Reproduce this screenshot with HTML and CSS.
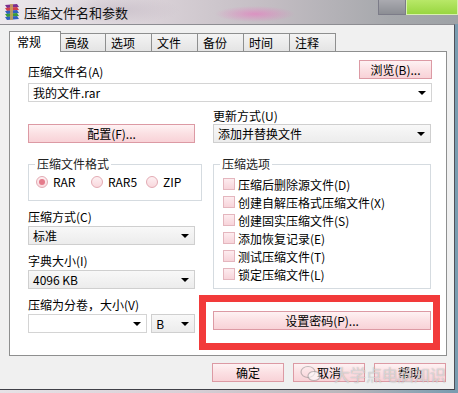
FILE: index.html
```html
<!DOCTYPE html>
<html lang="zh-CN">
<head>
    <meta charset="UTF-8">
    <title>压缩文件名和参数</title>
    <link rel="stylesheet" href="styles.css">
</head>
<body>

    <div class="titlebar">
        <svg class="app-icon" width="18" height="18" viewBox="0 0 18 18">
            <polygon points="2,2 14,1 16,4 4,5" fill="#7b2f8e"/>
            <polygon points="2,5 14,4 16,7 4,8" fill="#d0404a"/>
            <polygon points="2,8 14,7 16,10 4,11" fill="#2f5fc0"/>
            <polygon points="2,11 14,10 16,13 4,14" fill="#3c9a3a"/>
            <polygon points="2,14 14,13 16,16 4,17" fill="#2f5fc0"/>
            <rect x="7" y="1" width="3" height="16" fill="#c9a25a" opacity="0.85"/>
        </svg>
        <span class="title">压缩文件名和参数</span>
        <div class="win-btns">
            <span class="win-btn min"></span>
            <span class="win-btn close"></span>
        </div>
    </div>

    <div class="client">
        <div class="tabs">
            <span class="tab active">常规</span>
            <span class="tab">高级</span>
            <span class="tab">选项</span>
            <span class="tab">文件</span>
            <span class="tab">备份</span>
            <span class="tab">时间</span>
            <span class="tab">注释</span>
        </div>

        <div class="panel">
            <div class="row-top">
                <span class="label">压缩文件名(A)</span>
                <button class="btn browse">浏览(B)...</button>
            </div>
            <div class="combo edit"><span>我的文件.rar</span><i class="arrow"></i></div>

            <div class="cols">
                <div class="col col-left">
                    <button class="btn wide config">配置(F)...</button>

                    <fieldset class="group">
                        <legend>压缩文件格式</legend>
                        <div class="radios">
                            <span class="radio-item"><i class="radio checked"></i>RAR</span>
                            <span class="radio-item"><i class="radio"></i>RAR5</span>
                            <span class="radio-item"><i class="radio"></i>ZIP</span>
                        </div>
                    </fieldset>

                    <span class="label field-label">压缩方式(C)</span>
                    <div class="combo"><span>标准</span><i class="arrow"></i></div>

                    <span class="label field-label">字典大小(I)</span>
                    <div class="combo dict"><span>4096 KB</span><i class="arrow"></i></div>

                    <span class="label field-label">压缩为分卷，大小(V)</span>
                    <div class="split">
                        <div class="combo edit volume"><span></span><i class="arrow"></i></div>
                        <div class="combo unit"><span>B</span><i class="arrow"></i></div>
                    </div>
                </div>

                <div class="col col-right">
                    <span class="label update-label">更新方式(U)</span>
                    <div class="combo"><span>添加并替换文件</span><i class="arrow"></i></div>

                    <fieldset class="group options">
                        <legend>压缩选项</legend>
                        <div class="check-row"><i class="check"></i>压缩后删除源文件(D)</div>
                        <div class="check-row"><i class="check"></i>创建自解压格式压缩文件(X)</div>
                        <div class="check-row"><i class="check"></i>创建固实压缩文件(S)</div>
                        <div class="check-row"><i class="check"></i>添加恢复记录(E)</div>
                        <div class="check-row"><i class="check"></i>测试压缩文件(T)</div>
                        <div class="check-row"><i class="check"></i>锁定压缩文件(L)</div>
                    </fieldset>

                    <button class="btn wide password">设置密码(P)...</button>
                </div>
            </div>
        </div>

        <div class="actions">
            <button class="btn action">确定</button>
            <button class="btn action">取消</button>
            <button class="btn action">帮助</button>
        </div>
    </div>

    <!-- annotation drawn over the screenshot -->
    <div class="highlight"></div>

    <div class="watermark">
        <svg width="22" height="18" viewBox="0 0 22 18">
            <ellipse cx="8" cy="7" rx="7" ry="5.5" fill="none" stroke="rgba(120,120,120,0.45)" stroke-width="1.2"/>
            <ellipse cx="14" cy="11" rx="6" ry="4.5" fill="rgba(255,255,255,0.6)" stroke="rgba(120,120,120,0.45)" stroke-width="1.2"/>
        </svg>
        <span>大学点电脑知识</span>
    </div>

</body>
</html>
```

FILE: styles.css
```css
body {
    margin: 0;
    width: 458px;
    height: 393px;
    overflow: hidden;
    position: relative;
    font-family: "Noto Sans CJK SC", "Liberation Sans", sans-serif;
    font-size: 12px;
    color: #000;
    background: linear-gradient(90deg, #e6e2e6 0%, #d9d0d7 40%, #b9b6bb 75%, #7a9cb0 99%);
}

.titlebar {
    height: 24px;
    display: flex;
    align-items: center;
    padding-left: 3px;
    background:
        radial-gradient(ellipse 40px 8px at 255px 14px, rgba(236, 110, 190, 0.55), transparent),
        radial-gradient(ellipse 60px 14px at 120px 10px, rgba(200, 190, 200, 0.7), transparent),
        linear-gradient(90deg, #ece8ec 0%, #d8d0d6 35%, #c2bcc2 60%, #a6a8ac 85%, #9ea2a6 100%);
}

.app-icon {
    flex: none;
}

.title {
    margin-left: 3px;
    font-size: 13px;
    color: #111;
}

.win-btns {
    margin-left: auto;
    align-self: flex-start;
    display: flex;
}

.win-btn {
    height: 14px;
    border: 1px solid #7c7c88;
    border-top: none;
}

.win-btn.min {
    width: 26px;
    background: linear-gradient(#aaaab0, #8c8e94);
}

.win-btn.close {
    width: 50px;
    border-color: #d8f0b0;
    background: linear-gradient(#b8e868, #98d640);
}

.client {
    width: 455px;
    height: 366px;
    box-sizing: border-box;
    background: #f0f0f0;
    border-top: 1px solid #8d8d92;
    border-right: 1px solid #505058;
    border-bottom: 1px solid #404048;
    padding-top: 6px;
}

.tabs {
    display: flex;
    align-items: flex-end;
    height: 20px;
    padding-left: 9px;
}

.tab {
    width: 47px;
    height: 18px;
    box-sizing: border-box;
    margin-left: -1px;
    padding-left: 5px;
    line-height: 17px;
    border: 1px solid #8e8f8f;
    border-bottom: none;
    background: linear-gradient(#f4f4f4, #e4e4e4);
}

.tab.active {
    width: 52px;
    height: 21px;
    margin-left: 0;
    margin-right: -1px;
    margin-bottom: -1px;
    padding-left: 7px;
    line-height: 19px;
    background: #fff;
    position: relative;
    z-index: 1;
}

.panel {
    margin-left: 9px;
    width: 438px;
    height: 305px;
    box-sizing: border-box;
    background: #fff;
    border: 1px solid #8e8f8f;
    padding: 8px 14px 0 18px;
}

.label {
    display: block;
    line-height: 15px;
    white-space: nowrap;
}

.row-top {
    display: flex;
    justify-content: space-between;
    align-items: flex-end;
    height: 19px;
}

.btn {
    font-family: inherit;
    font-size: 12px;
    height: 19px;
    box-sizing: border-box;
    padding: 0;
    line-height: 17px;
    color: #000;
    border: 1px solid #dc9aa4;
    background: linear-gradient(#fef2f3, #fbe0e3 50%, #f8d2d7);
}

.browse {
    width: 73px;
}

.wide {
    display: block;
    width: 100%;
}

.combo {
    height: 19px;
    box-sizing: border-box;
    display: flex;
    align-items: center;
    justify-content: space-between;
    padding: 0 5px 0 4px;
    border: 1px solid #cfcfcf;
    background: linear-gradient(#f8f8f8, #ececec);
    white-space: nowrap;
}

.combo.edit {
    background: #fff;
    border-color: #d4d4d4;
}

.row-top + .combo {
    margin-top: 4px;
}

.arrow {
    width: 0;
    height: 0;
    border-left: 4px solid transparent;
    border-right: 4px solid transparent;
    border-top: 4px solid #000;
    flex: none;
}

.cols {
    display: flex;
    gap: 18px;
    margin-top: 6px;
}

.col-left {
    width: 167px;
}

.col-right {
    width: 218px;
}

.config {
    margin-top: 16px;
}

.update-label + .combo {
    margin-top: 1px;
}

.group {
    margin: 14px 0 0;
    border: 1px solid #d5dbe0;
    padding: 5px 0 12px 7px;
}

.group legend {
    margin-left: -1px;
    padding: 0 2px;
    line-height: 14px;
    color: #222;
}

.radios {
    display: flex;
}

.radio-item {
    width: 55px;
    display: flex;
    align-items: center;
    height: 12px;
    line-height: 12px;
}

.radio {
    width: 12px;
    height: 12px;
    box-sizing: border-box;
    border-radius: 50%;
    border: 1px solid #e3aab3;
    background: linear-gradient(#fdf0f2, #f8d8dd);
    margin-right: 5px;
    position: relative;
    flex: none;
}

.radio.checked::after {
    content: "";
    position: absolute;
    left: 2px;
    top: 2px;
    width: 6px;
    height: 6px;
    border-radius: 50%;
    background: #e47a8a;
}

.field-label {
    margin-top: 8px;
}

.field-label + .combo,
.field-label + .split {
    margin-top: 2px;
}

.split {
    display: flex;
    gap: 4px;
}

.volume {
    width: 120px;
}

.unit {
    width: 44px;
}

.options {
    padding: 4px 0 5px 9px;
}

.options legend {
    margin-left: -3px;
}

.check-row {
    height: 18px;
    display: flex;
    align-items: center;
    white-space: nowrap;
}

.check {
    width: 12px;
    height: 12px;
    box-sizing: border-box;
    border: 1px solid #e4b6be;
    background: linear-gradient(#fdecef, #f7d4da);
    margin-right: 3px;
    flex: none;
}

.password {
    margin-top: 22px;
}

.actions {
    display: flex;
    justify-content: flex-end;
    gap: 9px;
    margin-top: 7px;
    padding-right: 8px;
}

.action {
    width: 72px;
}

.highlight {
    position: absolute;
    left: 199px;
    top: 295px;
    width: 241px;
    height: 55px;
    box-sizing: border-box;
    border: 7px solid #f23a3a;
}

.watermark {
    position: absolute;
    left: 300px;
    top: 362px;
    display: flex;
    align-items: center;
    gap: 12px;
    font-size: 16px;
    color: rgba(255, 255, 255, 0.55);
    text-shadow: 0 0 1px rgba(90, 90, 90, 0.55);
}
```
